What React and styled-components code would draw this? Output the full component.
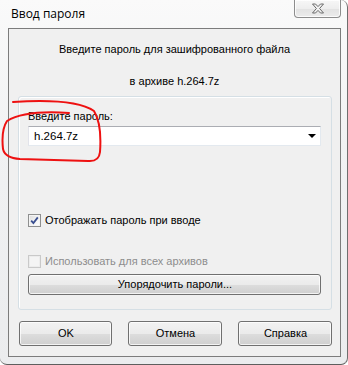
import React from 'react';
import styled, { createGlobalStyle } from 'styled-components';

const GlobalStyle = createGlobalStyle`
  html, body {
    margin: 0;
    padding: 0;
    background: #ffffff;
  }
  body {
    font-family: "Liberation Sans", "Open Sans", sans-serif;
    font-size: 11px;
    color: #000;
  }
`;

const Window = styled.div`
  position: relative;
  box-sizing: border-box;
  width: 348px;
  height: 365px;
  display: flex;
  flex-direction: column;
  background: linear-gradient(to bottom, #fafafa 0%, #f1f2f3 40%, #ebecee 100%);
  border-right: 1px solid #6f6f6f;
  border-bottom: 1px solid #5e5e5e;
  border-radius: 0 7px 7px 7px;
  overflow: hidden;
`;

const TitleBar = styled.div`
  height: 28px;
  display: flex;
  justify-content: space-between;
  align-items: flex-start;
  flex-shrink: 0;
`;

const Title = styled.div`
  padding: 6px 0 0 11px;
  font-family: "Open Sans", "Liberation Sans", sans-serif;
  font-size: 12px;
  line-height: 16px;
  color: #000;
`;

const CloseButton = styled.div`
  box-sizing: border-box;
  width: 47px;
  height: 18px;
  margin-right: 6px;
  display: flex;
  align-items: center;
  justify-content: center;
  border: 1px solid #8d8d8d;
  border-top: none;
  border-radius: 0 0 4px 4px;
  background: linear-gradient(to bottom, #f7f7f7 0%, #eeeeee 50%, #e2e2e2 51%, #ececec 100%);
  box-shadow: inset 0 0 0 1px rgba(255, 255, 255, 0.8);
`;

const Client = styled.div`
  flex: 1;
  display: flex;
  flex-direction: column;
  margin: 0 6px 7px 8px;
  border: 1px solid #7c7c7c;
  background: #f0f0f0;
`;

const Message = styled.div`
  display: flex;
  flex-direction: column;
  align-items: center;
  gap: 17px;
  padding-top: 13px;
  line-height: 15px;
`;

const Group = styled.div`
  display: flex;
  flex-direction: column;
  margin: 7px 8px 0 9px;
  padding: 12px 10px 14px 9px;
  border: 1px solid #d5dfe5;
  border-radius: 3px;
  box-shadow: inset 1px 1px 0 #ffffff;
`;

const Label = styled.div`
  line-height: 15px;
  height: 15px;
`;

const Combo = styled.div`
  box-sizing: border-box;
  margin-top: 2px;
  height: 20px;
  display: flex;
  align-items: center;
  justify-content: space-between;
  padding: 0 4px 0 5px;
  background: #ffffff;
  border: 1px solid #e3e9ef;
  border-top-color: #abadb3;
  border-left-color: #e2e3ea;
`;

const ComboText = styled.span`
  font-size: 11.5px;
  line-height: 15px;
`;

const Arrow = styled.span`
  width: 0;
  height: 0;
  border-left: 4px solid transparent;
  border-right: 4px solid transparent;
  border-top: 4px solid #000;
`;

const CheckRow = styled.label`
  display: flex;
  align-items: center;
  gap: 4px;
  height: 15px;
  line-height: 15px;
  margin-top: ${p => p.$top}px;
  color: ${p => (p.$disabled ? '#8d8d8d' : '#000')};
`;

const Box = styled.span`
  box-sizing: border-box;
  width: 13px;
  height: 13px;
  flex-shrink: 0;
  display: flex;
  align-items: center;
  justify-content: center;
  border: 1px solid ${p => (p.$disabled ? '#c9c9c9' : '#8e8f8f')};
  background: ${p =>
    p.$disabled
      ? '#f4f4f4'
      : 'linear-gradient(135deg, #dcdcdc 0%, #f5f5f5 60%, #ffffff 100%)'};
  box-shadow: inset 0 0 0 1px ${p => (p.$disabled ? '#ececec' : '#f4f4f4')};
`;

const Button = styled.div`
  box-sizing: border-box;
  height: ${p => p.$h || 21}px;
  width: ${p => (p.$w ? `${p.$w}px` : 'auto')};
  display: flex;
  align-items: center;
  justify-content: center;
  margin-top: ${p => p.$top || 0}px;
  border: 1px solid #707070;
  border-radius: 3px;
  background: linear-gradient(to bottom, #f2f2f2 0%, #ebebeb 50%, #dddddd 51%, #cfcfcf 100%);
  box-shadow: inset 0 0 0 1px rgba(255, 255, 255, 0.75);
  line-height: 15px;
  padding-left: 1px;
`;

const Footer = styled.div`
  display: flex;
  justify-content: space-between;
  margin: 11px 8px 0 10px;
`;

const Annotation = styled.svg`
  position: absolute;
  left: 0;
  top: 0;
  pointer-events: none;
`;

const CloseGlyph = () => (
  <svg width="14" height="11" viewBox="0 0 14 11">
    <path
      d="M1.5 1 H4.5 L7 3.6 L9.5 1 H12.5 L8.6 5.5 L12.5 10 H9.5 L7 7.4 L4.5 10 H1.5 L5.4 5.5 Z"
      fill="#f2f2f2"
      stroke="#6a6a6a"
      strokeWidth="1"
      strokeLinejoin="round"
    />
  </svg>
);

const CheckMark = () => (
  <svg width="9" height="9" viewBox="0 0 9 9">
    <path d="M1.2 4.6 L3.4 7 L7.8 1.4" fill="none" stroke="#3a4f90" strokeWidth="1.8" />
  </svg>
);

const App = () => (
  <>
    <GlobalStyle />
    <Window>
      <TitleBar>
        <Title>Ввод пароля</Title>
        <CloseButton>
          <CloseGlyph />
        </CloseButton>
      </TitleBar>
      <Client>
        <Message>
          <span>Введите пароль для зашифрованного файла</span>
          <span>в архиве h.264.7z</span>
        </Message>
        <Group>
          <Label>Введите пароль:</Label>
          <Combo>
            <ComboText>h.264.7z</ComboText>
            <Arrow />
          </Combo>
          <CheckRow $top={67}>
            <Box>
              <CheckMark />
            </Box>
            Отображать пароль при вводе
          </CheckRow>
          <CheckRow $top={26} $disabled>
            <Box $disabled />
            Использовать для всех архивов
          </CheckRow>
          <Button $top={5}>Упорядочить пароли...</Button>
        </Group>
        <Footer>
          <Button $w={93} $h={25}>OK</Button>
          <Button $w={94} $h={25}>Отмена</Button>
          <Button $w={94} $h={25}>Справка</Button>
        </Footer>
      </Client>
      <Annotation width="348" height="365" viewBox="0 0 348 365">
        <path
          d="M13 102 Q 75 98, 94 111 Q 102 124, 100 152 Q 99 162, 88 161 L 20 159 Q 5 158, 3 149 Q 1 130, 7 121 Q 25 110, 69 113"
          fill="none"
          stroke="#ee1111"
          strokeWidth="2"
          strokeLinecap="round"
          strokeLinejoin="round"
        />
      </Annotation>
    </Window>
  </>
);

export default App;
